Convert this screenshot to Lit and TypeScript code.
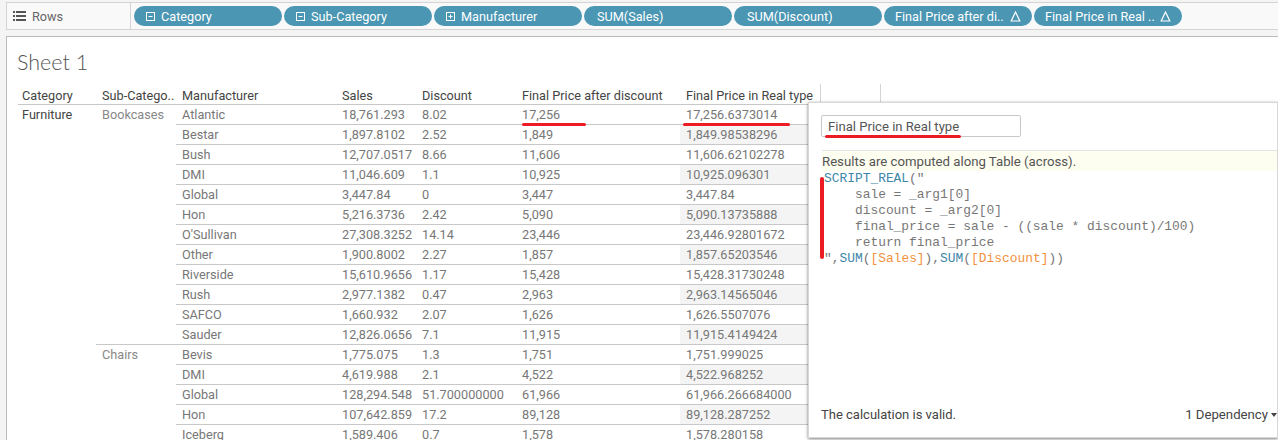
import { LitElement, html, css } from "lit";
import { customElement } from "lit/decorators.js";

const rows: string[][] = [
  ["Furniture","Bookcases","Atlantic","18,761.293","8.02","17,256","17,256.6373014"],
  ["","","Bestar","1,897.8102","2.52","1,849","1,849.98538296"],
  ["","","Bush","12,707.0517","8.66","11,606","11,606.62102278"],
  ["","","DMI","11,046.609","1.1","10,925","10,925.096301"],
  ["","","Global","3,447.84","0","3,447","3,447.84"],
  ["","","Hon","5,216.3736","2.42","5,090","5,090.13735888"],
  ["","","O'Sullivan","27,308.3252","14.14","23,446","23,446.92801672"],
  ["","","Other","1,900.8002","2.27","1,857","1,857.65203546"],
  ["","","Riverside","15,610.9656","1.17","15,428","15,428.31730248"],
  ["","","Rush","2,977.1382","0.47","2,963","2,963.14565046"],
  ["","","SAFCO","1,660.932","2.07","1,626","1,626.5507076"],
  ["","","Sauder","12,826.0656","7.1","11,915","11,915.4149424"],
  ["","Chairs","Bevis","1,775.075","1.3","1,751","1,751.999025"],
  ["","","DMI","4,619.988","2.1","4,522","4,522.968252"],
  ["","","Global","128,294.548","51.700000000","61,966","61,966.266684000"],
  ["","","Hon","107,642.859","17.2","89,128","89,128.287252"],
  ["","","Iceberg","1,589.406","0.7","1,578","1,578.280158"],
];

const pills = [
  { t: "Category", i: "minus" },
  { t: "Sub-Category", i: "minus" },
  { t: "Manufacturer", i: "plus" },
  { t: "SUM(Sales)", i: "", s: true },
  { t: "SUM(Discount)", i: "", s: true },
  { t: "Final Price after di..", i: "", d: true },
  { t: "Final Price in Real ..", i: "", d: true },
];

@customElement("app-root")
export class AppRoot extends LitElement {
  static styles = css`
    :host { display: block; width: 1278px; height: 440px; overflow: hidden; background: #f4f4f4;
      font-family: Roboto, "Liberation Sans", sans-serif; font-size: 12.7px; color: #777; }
    .shelf { display: flex; align-items: center; height: 26px; margin: 2px 0 0 6px; background: #f9f9f9;
      border-top: 1px solid #d4d4d4; border-bottom: 1px solid #d4d4d4; border-left: 1px solid #d4d4d4; }
    .label { display: flex; align-items: center; gap: 6px; width: 124px; height: 100%; padding-left: 6px; box-sizing: border-box;
      border-right: 1px solid #d4d4d4; color: #666; }
    .pills { display: flex; gap: 2px; margin-left: 3px; }
    .pill { display: flex; align-items: center; width: 148px; height: 20px; box-sizing: border-box; padding: 0 11px; gap: 5px;
      border-radius: 10px; background: #4a96b3; color: #fff; }
    .pill.s { padding-left: 13px; }
    .pill .name { flex: 1; white-space: nowrap; }
    .pill svg { flex: none; }
    .sheet { margin: 6px 0 0 6px; height: 404px; background: #fff; border-top: 1px solid #bbb; border-left: 1px solid #bbb;
      position: relative; box-sizing: border-box; overflow: hidden; }
    .title { font-family: Lato, sans-serif; font-weight: 300; font-size: 21.5px; color: #555; height: 46px; padding: 14px 0 0 10px; box-sizing: border-box; line-height: 22px; }
    .thead, .row { display: grid; grid-template-columns: 78px 80px 160px 80px 100px 164px 140px; margin-left: 11px; width: 802px; }
    .thead { height: 22px; box-sizing: border-box; padding-top: 3px; align-items: center; border-bottom: 1px solid #c8c8c8; color: #444; }
    .thead span, .cell { padding-left: 6px; white-space: nowrap; overflow: hidden; }
    .thead span:first-child, .row .cell:first-child { padding-left: 4px; }
    .tail { position: absolute; top: 47px; height: 20px; border-left: 1px solid #d4d4d4; }
    .tail.a { left: 813px; } .tail.b { left: 873px; }
    .row { height: 20px; align-items: stretch; }
    .cell { line-height: 19px; height: 20px; box-sizing: border-box; border-bottom: 1px solid #c8c8c8; }
    .cell.nb { border-bottom-color: transparent; }
    .cell.cat { color: #444; }
    .cell.sub { color: #888; }
    .cell.real.alt { background: #f4f4f4; }
    .popup { position: absolute; left: 801px; top: 65px; right: 0; bottom: 2px; background: #fff; border: 1px solid #d8d8d8; box-shadow: 0 1px 3px rgba(0,0,0,.5);
      box-sizing: border-box; display: flex; flex-direction: column; }
    .name-in { margin: 12px 0 0 12px; width: 200px; height: 22px; box-sizing: border-box; border: 1px solid #c8c8c8; border-radius: 2px; padding-left: 6px; line-height: 21px; color: #555; font-size: 13.1px; }
    .result { margin: 13px 0 0 13px; height: 20px; border-top: 1px solid #e4e4e4; background: #fdfdf0; line-height: 21px; color: #555; font-size: 13.2px; }
    pre { margin: 0 0 0 15px; font-family: "Liberation Mono", monospace; font-size: 12.9px; line-height: 16px; color: #777; flex: 1; }
    .fn { color: #3d86a8; } .fld { color: #f2913c; }
    .foot { display: flex; justify-content: space-between; padding: 0 0 15px 12px; color: #444; font-size: 13px; }
    .dep { display: flex; align-items: center; gap: 3px; font-size: 13.2px; }
    .mark { position: absolute; background: #ed1c24; border-radius: 2px; }
    .m1 { left: 515px; top: 86px; width: 64px; height: 3px; }
    .m2 { left: 676px; top: 86px; width: 107px; height: 3px; }
    .m3 { left: 818px; top: 98px; width: 136px; height: 3px; }
    .m4 { left: 813px; top: 140px; width: 4px; height: 82px; }
  `;

  icon(k: string) {
    if (!k) return "";
    return html`<svg width="11" height="11" viewBox="0 0 11 11" fill="none" stroke="#fff" stroke-width="1">
      <rect x="1.5" y="1.5" width="8" height="8"></rect>
      <path d=${k === "plus" ? "M3.5 5.5h4M5.5 3.5v4" : "M3.5 5.5h4"}></path></svg>`;
  }

  render() {
    return html`
      <div class="shelf">
        <div class="label">
          <svg width="13" height="11" viewBox="0 0 13 11" fill="#555"><rect x="0" y="0" width="2" height="2"/><rect x="3" y="0" width="10" height="2"/><rect x="0" y="4" width="2" height="2"/><rect x="3" y="4" width="10" height="2"/><rect x="0" y="8" width="2" height="2"/><rect x="3" y="8" width="10" height="2"/></svg>
          <span>Rows</span>
        </div>
        <div class="pills">
          ${pills.map(p => html`<div class="pill ${p.s ? "s" : ""}">${this.icon(p.i)}<span class="name">${p.t}</span>${p.d ? html`<svg width="11" height="11" viewBox="0 0 11 11" fill="none" stroke="#fff" stroke-width="1.2"><path d="M5.5 1 L1.2 10 H9.8 Z"/></svg>` : ""}</div>`)}
        </div>
      </div>
      <div class="sheet">
        <div class="title">Sheet 1</div>
        <div class="thead"><span>Category</span><span>Sub-Catego..</span><span>Manufacturer</span><span>Sales</span><span>Discount</span><span>Final Price after discount</span><span>Final Price in Real type</span></div>
        <div class="tail a"></div><div class="tail b"></div>
        ${rows.map((r, i) => {
          const nextChair = rows[i + 1] && rows[i + 1][1] !== "";
          return html`<div class="row">
            <div class="cell cat nb">${r[0]}</div>
            <div class="cell sub ${nextChair ? "" : "nb"}">${r[1]}</div>
            ${r.slice(2).map((c, j) => html`<div class="cell ${j === 4 ? "real" : ""} ${j === 4 && i % 2 ? "alt" : ""}">${c}</div>`)}
          </div>`;
        })}
        <div class="popup">
          <div class="name-in">Final Price in Real type</div>
          <div class="result">Results are computed along Table (across).</div>
          <pre><span class="fn">SCRIPT_REAL</span>("
    sale = _arg1[0]
    discount = _arg2[0]
    final_price = sale - ((sale * discount)/100)
    return final_price
",<span class="fn">SUM</span>(<span class="fld">[Sales]</span>),<span class="fn">SUM</span>(<span class="fld">[Discount]</span>))</pre>
          <div class="foot"><span>The calculation is valid.</span><span class="dep">1 Dependency <svg width="6" height="4" viewBox="0 0 6 4" fill="#444"><path d="M0 0h6L3 4z"/></svg></span></div>
        </div>
        <div class="mark m1"></div><div class="mark m2"></div><div class="mark m3"></div><div class="mark m4"></div>
      </div>
    `;
  }
}
